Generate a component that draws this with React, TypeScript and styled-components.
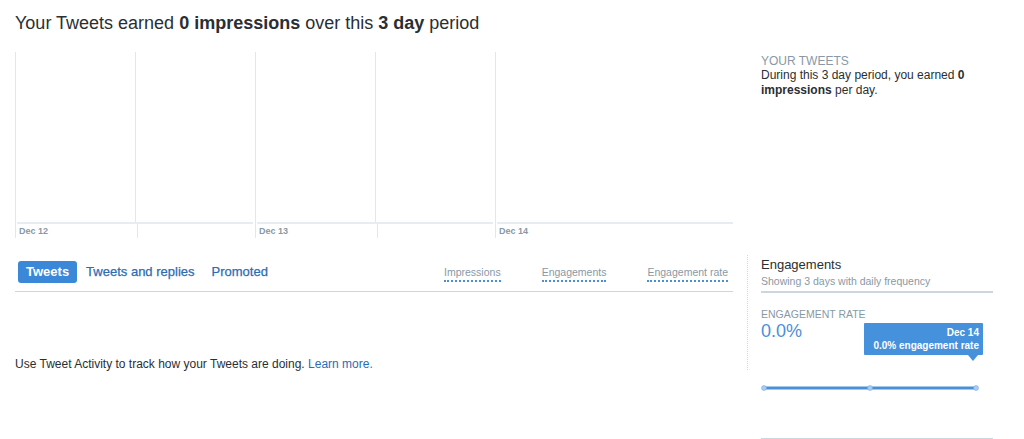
import React from "react";
import styled, { createGlobalStyle } from "styled-components";

const Global = createGlobalStyle`
  html, body { margin: 0; padding: 0; background: #fff; }
  body { font-family: "Liberation Sans", Arial, sans-serif; color: #292f33; overflow: hidden; }
`;

const Page = styled.div`
  width: 1024px;
  height: 439px;
  padding: 12px 0 0 15px;
  box-sizing: border-box;
`;

const Title = styled.h1`
  margin: 0;
  font-size: 18px;
  line-height: 22px;
  font-weight: 400;
  color: #292f33;
  b { font-weight: 700; }
`;

const TopSection = styled.div`
  display: flex;
  margin-top: 18px;
`;

const Chart = styled.div`
  display: flex;
  width: 720px;
  height: 186px;
`;

const DayColumn = styled.div`
  flex: 1;
  display: flex;
  flex-direction: column;
  border-left: 1px solid #e1e8ed;
`;

const Plot = styled.div`
  display: flex;
  height: 170px;
`;

const Half = styled.div<{ $line?: boolean }>`
  flex: 1;
  border-left: ${(p) => (p.$line ? "1px solid #e1e8ed" : "none")};
`;

const Baseline = styled.div`
  height: 2px;
  margin: 0 2px 0 1px;
  background: #e6ecf0;
`;

const Footer = styled.div`
  display: flex;
  height: 14px;
`;

const DayLabel = styled.div`
  flex: 1;
  font-size: 9px;
  font-weight: 700;
  color: #8899a6;
  padding: 2px 0 0 3px;
  line-height: 10px;
`;

const Summary = styled.div`
  margin-left: 26px;
  width: 232px;
  padding-top: 2px;
  font-size: 12px;
  line-height: 15px;
  color: #292f33;
  b { font-weight: 700; }
`;

const Caps = styled.div`
  text-transform: uppercase;
  color: #8899a6;
  font-size: 12px;
  line-height: 14px;
`;

const LowerSection = styled.div`
  display: flex;
  margin-top: 17px;
`;

const LeftPane = styled.div`
  width: 718px;
`;

const TabBar = styled.div`
  display: flex;
  align-items: center;
  height: 37px;
  border-bottom: 1px solid #ccd6dd;
  padding: 0 0 3px 3px;
  box-sizing: border-box;
`;

const Tabs = styled.div`
  display: flex;
  gap: 1px;
`;

const Tab = styled.div<{ $active?: boolean }>`
  height: 22px;
  line-height: 22px;
  padding: 0 8px;
  border-radius: 3px;
  font-size: 13px;
  font-weight: ${(p) => (p.$active ? 700 : 400)};
  background: ${(p) => (p.$active ? "#3b88d8" : "transparent")};
  color: ${(p) => (p.$active ? "#fff" : "#2b6cb3")};
  -webkit-text-stroke: ${(p) => (p.$active ? "0" : "0.25px #2b6cb3")};
`;

const Metrics = styled.div`
  display: flex;
  margin-left: auto;
  gap: 41px;
  padding-right: 5px;
  padding-top: 4px;
`;

const Metric = styled.div`
  font-size: 10.5px;
  color: #8899a6;
  padding-bottom: 2px;
  border-bottom: 2px dotted #4a90d9;
`;

const Intro = styled.p`
  margin: 65px 0 0;
  font-size: 12px;
  color: #292f33;
  a { color: #2b6cb3; text-decoration: none; }
`;

const RightPane = styled.div`
  margin-left: 14px;
  width: 246px;
`;

const Card = styled.div`
  border-left: 1px dotted #ccd6dd;
  padding: 2px 0 0 13px;
  height: 115px;
  box-sizing: border-box;
  position: relative;
`;

const CardTitle = styled.div`
  font-size: 13px;
  line-height: 16px;
  color: #292f33;
`;

const CardSub = styled.div`
  margin-top: 2px;
  font-size: 10.5px;
  line-height: 13px;
  color: #8899a6;
  padding-bottom: 3px;
  border-bottom: 2px solid #ccd6dd;
`;

const StatLabel = styled.div`
  margin-top: 15px;
  font-size: 10.5px;
  line-height: 12px;
  color: #8899a6;
  text-transform: uppercase;
`;

const StatValue = styled.div`
  margin-top: 1px;
  font-size: 18px;
  line-height: 20px;
  color: #4a90d9;
  font-weight: 300;
`;

const Tooltip = styled.div`
  position: absolute;
  left: 116px;
  top: 68px;
  width: 119px;
  height: 32px;
  box-sizing: border-box;
  padding: 3px 4px 0 0;
  background: #4591dc;
  color: #fff;
  text-align: right;
  white-space: nowrap;
  font-size: 10px;
  font-weight: 700;
  line-height: 13px;
  border-radius: 1px;
  &::after {
    content: "";
    position: absolute;
    right: 5px;
    bottom: -6px;
    border-left: 5px solid transparent;
    border-right: 5px solid transparent;
    border-top: 6px solid #4591dc;
  }
`;

const TipDate = styled.div`
  font-size: 10px;
`;

const Spark = styled.div`
  margin: 0 0 0 14px;
  height: 68px;
  border-bottom: 1px solid #ccd6dd;
  width: 232px;
`;

const days = [
  { label: "Dec 12", split: true },
  { label: "Dec 13", split: true },
  { label: "Dec 14", split: false },
];

export default function App() {
  return (
    <>
      <Global />
      <Page>
        <Title>
          Your Tweets earned <b>0 impressions</b> over this <b>3 day</b> period
        </Title>
        <TopSection>
          <Chart>
            {days.map((d) => (
              <DayColumn key={d.label}>
                <Plot>
                  <Half />
                  {d.split && <Half $line />}
                </Plot>
                <Baseline />
                <Footer>
                  <DayLabel>{d.label}</DayLabel>
                  {d.split && <Half $line />}
                </Footer>
              </DayColumn>
            ))}
          </Chart>
          <Summary>
            <Caps>Your Tweets</Caps>
            During this 3 day period, you earned <b>0 impressions</b> per day.
          </Summary>
        </TopSection>
        <LowerSection>
          <LeftPane>
            <TabBar>
              <Tabs>
                <Tab $active>Tweets</Tab>
                <Tab>Tweets and replies</Tab>
                <Tab>Promoted</Tab>
              </Tabs>
              <Metrics>
                <Metric>Impressions</Metric>
                <Metric>Engagements</Metric>
                <Metric>Engagement rate</Metric>
              </Metrics>
            </TabBar>
            <Intro>
              Use Tweet Activity to track how your Tweets are doing. <a href="#">Learn more.</a>
            </Intro>
          </LeftPane>
          <RightPane>
            <Card>
              <CardTitle>Engagements</CardTitle>
              <CardSub>Showing 3 days with daily frequency</CardSub>
              <StatLabel>Engagement rate</StatLabel>
              <StatValue>0.0%</StatValue>
              <Tooltip>
                <TipDate>Dec 14</TipDate>
                0.0% engagement rate
              </Tooltip>
            </Card>
            <Spark>
              <svg width="232" height="30" viewBox="0 0 232 30">
                <line x1="3" y1="18" x2="215" y2="18" stroke="#4a90d9" strokeWidth="3" />
                {[3, 109, 215].map((x) => (
                  <circle key={x} cx={x} cy="18" r="2.5" fill="#a9ccef" stroke="#6aa6e3" strokeWidth="0.5" />
                ))}
              </svg>
            </Spark>
          </RightPane>
        </LowerSection>
      </Page>
    </>
  );
}
